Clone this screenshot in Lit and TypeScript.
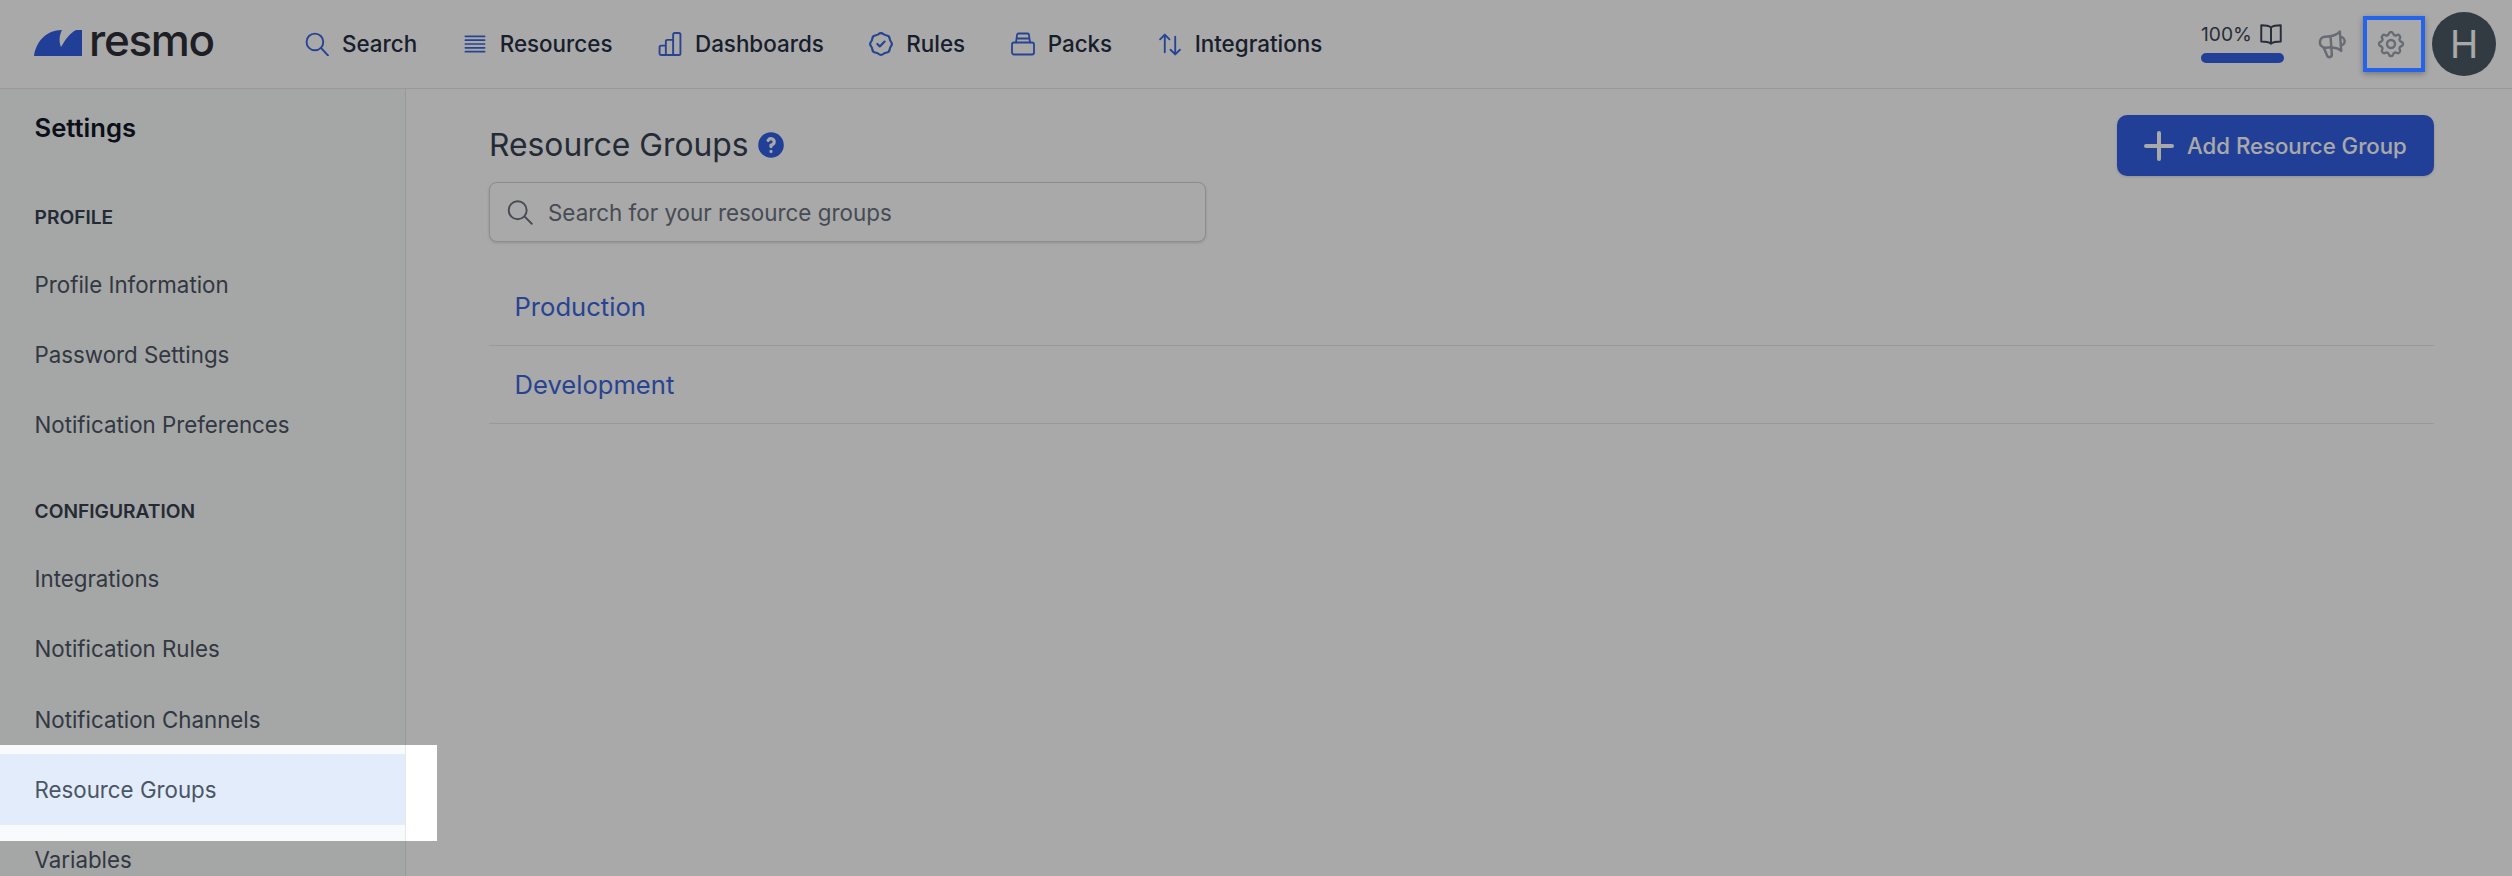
import { LitElement, html, css, svg } from "lit";
import { customElement } from "lit/decorators.js";

const ico = (body: unknown, box = "0 0 24 24") => html`<svg class="ico" viewBox=${box} fill="none" stroke="currentColor" stroke-width="1.800" stroke-linecap="round" stroke-linejoin="round">${body}</svg>`;

const nav: [string, unknown, string][] = [
  ["Search", svg`<circle cx="10" cy="10" r="8"/><path d="M16 16l6.500 7"/>`, "0.500 0.500 23 23"],
  ["Resources", svg`<path d="M2 4.500h20M2 8.500h20M2 12.500h20M2 16.500h20M2 20.500h20"/>`, "0 0 24 25"],
  ["Dashboards", svg`<path d="M2 15a1.500 1.500 0 011.500-1.500H8v9H3.500A1.500 1.500 0 012 21zM8 22.500V9.500A1.500 1.500 0 019.500 8H15v14.500zM15 22.500V3A1.500 1.500 0 0116.500 1.500h4A1.500 1.500 0 0122 3v18a1.500 1.500 0 01-1.500 1.500z"/>`, "0.500 0.500 23 23"],
  ["Rules", svg`<path d="M9 12l2 2 4-4M7.835 4.697a3.42 3.42 0 001.946-.806 3.42 3.42 0 014.438 0 3.42 3.42 0 001.946.806 3.42 3.42 0 013.138 3.138 3.42 3.42 0 00.806 1.946 3.42 3.42 0 010 4.438 3.42 3.42 0 00-.806 1.946 3.42 3.42 0 01-3.138 3.138 3.42 3.42 0 00-1.946.806 3.42 3.42 0 01-4.438 0 3.42 3.42 0 00-1.946-.806 3.42 3.42 0 01-3.138-3.138 3.42 3.42 0 00-.806-1.946 3.42 3.42 0 010-4.438 3.42 3.42 0 00.806-1.946 3.42 3.42 0 013.138-3.138z"/>`, "2 2 20 20"],
  ["Packs", svg`<path d="M1 13a2 2 0 012-2h18a2 2 0 012 2v8a2 2 0 01-2 2H3a2 2 0 01-2-2z"/><path d="M5 11l1-7.500A1.500 1.500 0 017.500 2h9A1.500 1.500 0 0118 3.500L19 11M5.500 7h13"/>`, "0 0.500 24 24"],
  ["Integrations", svg`<path d="M7 20V3M2.500 7.500L7 3l4.500 4.500M17 5v17M12.500 17.500L17 22l4.500-4.500"/>`, "0.500 0.500 23 23"],
];

const sections: [string, string[]][] = [
  ["PROFILE", ["Profile Information", "Password Settings", "Notification Preferences"]],
  ["CONFIGURATION", ["Integrations", "Notification Rules", "Notification Channels", "Resource Groups", "Variables"]],
];

@customElement("app-root")
export class AppRoot extends LitElement {
  static styles = css`
    :host { display: block; position: relative; width: 2512px; height: 876px; overflow: hidden; background: #fff; font-family: Inter, "Noto Sans", sans-serif; color: #1f2937; }
    .top { display: flex; align-items: center; height: 88px; border-bottom: 1px solid #e5e7eb; box-sizing: content-box; background: #fff; }
    .logo { display: flex; align-items: center; margin-left: 34px; width: 271px; flex: none; gap: 7px; }
    .mark { width: 48px; height: 26px; display: block; flex: none; position: relative; top: -1px; }
    .word { font-family: Inter, sans-serif; font-size: 44px; line-height: 48px; font-weight: 500; letter-spacing: -1.300px; color: #2e3038; position: relative; top: -4px; }
    .nav { display: flex; align-items: center; gap: 45.500px; }
    .nav a { display: flex; align-items: center; gap: 13px; font-size: 22.4px; font-weight: 500; color: #252e42; line-height: 32px; white-space: nowrap; }
    .ico { width: 24px; height: 24px; color: #3b66dc; flex: none; display: block; }
    .right { margin-left: auto; display: flex; align-items: center; margin-right: 16px; }
    .prog { width: 83px; display: flex; flex-direction: column; margin-right: 32px; margin-top: -4px; }
    .pl { display: flex; align-items: center; justify-content: space-between; font-size: 19.2px; line-height: 26px; color: #3d4656; height: 26px; }
    .book { width: 26px; height: 26px; color: #3d4656; display: block; }
    .bar { height: 10px; margin-top: 6px; border-radius: 5px; background: #3360e4; }
    .mega { width: 33px; height: 33px; color: #9ca3af; display: block; margin-right: 26px; transform: rotate(-4deg); }
    .gear { width: 32px; height: 32px; color: #9ca3af; display: block; margin-right: 25px; }
    .avatar { width: 64px; height: 64px; border-radius: 50%; background: #4b5a63; color: #fff; display: flex; align-items: center; justify-content: center; font-size: 38px; line-height: 1; }
    .body { display: flex; height: 787px; }
    .side { width: 405px; flex: none; background: #f9fafb; border-right: 1px solid #e5e7eb; padding-top: 19px; overflow: hidden; }
    .side h2 { margin: 0 0 37px 34.500px; font-size: 25.6px; line-height: 40px; font-weight: 600; color: #111827; }
    .label { margin: 0; padding-left: 34.500px; height: 64px; display: flex; align-items: center; font-size: 19.2px; font-weight: 600; color: #374151; }
    .sec + .sec { margin-top: 19px; }
    .item { height: 70.4px; display: flex; align-items: center; padding-left: 34.500px; font-size: 22.3px; color: #4b5563; }
    .item.on { background: #e2ecfb; }
    .main { flex: 1; min-width: 0; padding: 0 78px 0 83px; position: relative; }
    .head { display: flex; justify-content: space-between; align-items: flex-start; height: 93px; }
    .titlewrap { display: flex; align-items: center; gap: 6px; margin-top: 36px; height: 40px; }
    h1 { margin: 0; font-size: 31.8px; line-height: 40px; font-weight: 400; color: #374151; }
    .help { width: 32px; height: 32px; color: #3360e4; display: block; }
    .add { display: flex; align-items: center; gap: 13px; height: 61px; width: 317px; box-sizing: border-box; margin-top: 26px; padding-left: 27px; border-radius: 10px; background: #3360e4; color: #fff; font-size: 22.2px; font-weight: 500; box-shadow: 0 1px 3px rgba(0,0,0,.15); }
    .plus { width: 30px; height: 30px; display: block; flex: none; }
    .search { display: flex; align-items: center; width: 717px; height: 60px; box-sizing: border-box; border: 1px solid #d1d5db; border-radius: 8px; padding-left: 17px; gap: 14px; font-size: 22.4px; color: #6b7280; box-shadow: 0 1px 3px rgba(0,0,0,.15); background: #fff; }
    .search svg { width: 27px; height: 27px; color: #6b7280; display: block; }
    .rows { margin-top: 26px; }
    .row { height: 78px; display: flex; align-items: center; padding-left: 25.500px; border-bottom: 1px solid #e5e7eb; font-size: 25.6px; color: #3b66dc; box-sizing: border-box; }
    .layer { position: absolute; inset: 0; pointer-events: none; overflow: hidden; }
    .spot { position: absolute; left: 0; top: 745px; width: 437px; height: 96px; box-shadow: 0 0 0 3000px rgba(0,0,0,.337); }
    .spotfill { position: absolute; left: 406px; top: 745px; width: 31px; height: 96px; background: #fff; }
    .ring { position: absolute; left: 2363px; top: 16px; width: 62px; height: 56px; box-sizing: border-box; border: 4px solid #2563eb; box-shadow: 0 2px 6px rgba(0,0,0,.3); }
  `;

  render() {
    return html`
      <div class="top">
        <div class="logo">
          <svg class="mark" viewBox="0 0 48 26"><path fill="#3360e4" d="M0 26C2 12 12 0 28 0C25 6 25 12 27 17C31 10 36 3 42 0L48 0L48 26Z"/></svg>
          <span class="word">resmo</span>
        </div>
        <div class="nav">${nav.map(([t, i, b]) => html`<a>${ico(i, b)}<span>${t}</span></a>`)}</div>
        <div class="right">
          <div class="prog">
            <div class="pl"><span>100%</span>
              <svg class="book" viewBox="0 0 24 24" fill="none" stroke="currentColor" stroke-width="1.800" stroke-linejoin="round"><path d="M12 6c-2-1.500-5-2-9-2v15c4 0 7 .5 9 2 2-1.500 5-2 9-2V4c-4 0-7 .5-9 2zM12 6v15"/></svg>
            </div>
            <div class="bar"></div>
          </div>
          <svg class="mega" viewBox="0 0 24 24" fill="none" stroke="currentColor" stroke-width="1.800" stroke-linecap="round" stroke-linejoin="round"><path d="M11 5.882V19.240a1.760 1.760 0 01-3.417.592l-2.147-6.150M18 13a3 3 0 100-6M5.436 13.683A4.001 4.001 0 017 6h1.832c4.100 0 7.625-1.234 9.168-3v14c-1.543-1.766-5.067-3-9.168-3H7a3.988 3.988 0 01-1.564-.317z"/></svg>
          <svg class="gear" viewBox="0 0 24 24" fill="none" stroke="currentColor" stroke-width="1.800" stroke-linecap="round" stroke-linejoin="round"><path d="M10.325 4.317c.426-1.756 2.924-1.756 3.350 0a1.724 1.724 0 002.573 1.066c1.543-.94 3.310.826 2.370 2.370a1.724 1.724 0 001.065 2.572c1.756.426 1.756 2.924 0 3.350a1.724 1.724 0 00-1.066 2.573c.94 1.543-.826 3.310-2.370 2.370a1.724 1.724 0 00-2.572 1.065c-.426 1.756-2.924 1.756-3.350 0a1.724 1.724 0 00-2.573-1.066c-1.543.94-3.310-.826-2.370-2.370a1.724 1.724 0 00-1.065-2.572c-1.756-.426-1.756-2.924 0-3.350a1.724 1.724 0 001.066-2.573c-.94-1.543.826-3.310 2.370-2.370.996.608 2.296.07 2.572-1.065z"/><path d="M15 12a3 3 0 11-6 0 3 3 0 016 0z"/></svg>
          <div class="avatar">H</div>
        </div>
      </div>
      <div class="body">
        <aside class="side">
          <h2>Settings</h2>
          ${sections.map(([l, items]) => html`<div class="sec"><p class="label">${l}</p>
            ${items.map((t) => html`<div class="item ${t === "Resource Groups" ? "on" : ""}">${t}</div>`)}</div>`)}
        </aside>
        <main class="main">
          <div class="head">
            <div class="titlewrap"><h1>Resource Groups</h1>
              <svg class="help" viewBox="0 0 20 20" fill="currentColor"><path fill-rule="evenodd" clip-rule="evenodd" d="M18 10a8 8 0 11-16 0 8 8 0 0116 0zm-8-3a1 1 0 00-.867.5 1 1 0 11-1.731-1A3 3 0 0113 8a3.001 3.001 0 01-2 2.830V11a1 1 0 11-2 0v-1a1 1 0 011-1 1 1 0 100-2zm0 8a1 1 0 100-2 1 1 0 000 2z"/></svg>
            </div>
            <div class="add">
              <svg class="plus" viewBox="0 0 30 30" fill="none" stroke="currentColor" stroke-width="4" stroke-linecap="round"><path d="M15 2v26M2 15h26"/></svg>
              <span>Add Resource Group</span>
            </div>
          </div>
          <div class="search">
            <svg viewBox="0 0 24 24" fill="none" stroke="currentColor" stroke-width="1.700" stroke-linecap="round"><path d="M22 22l-6.500-6.500m2-5.500a8 8 0 11-16 0 8 8 0 0116 0z"/></svg>
            <span>Search for your resource groups</span>
          </div>
          <div class="rows">
            <div class="row">Production</div>
            <div class="row">Development</div>
          </div>
        </main>
      </div>
      <div class="layer">
        <div class="spotfill"></div>
        <div class="spot"></div>
        <div class="ring"></div>
      </div>
    `;
  }
}
